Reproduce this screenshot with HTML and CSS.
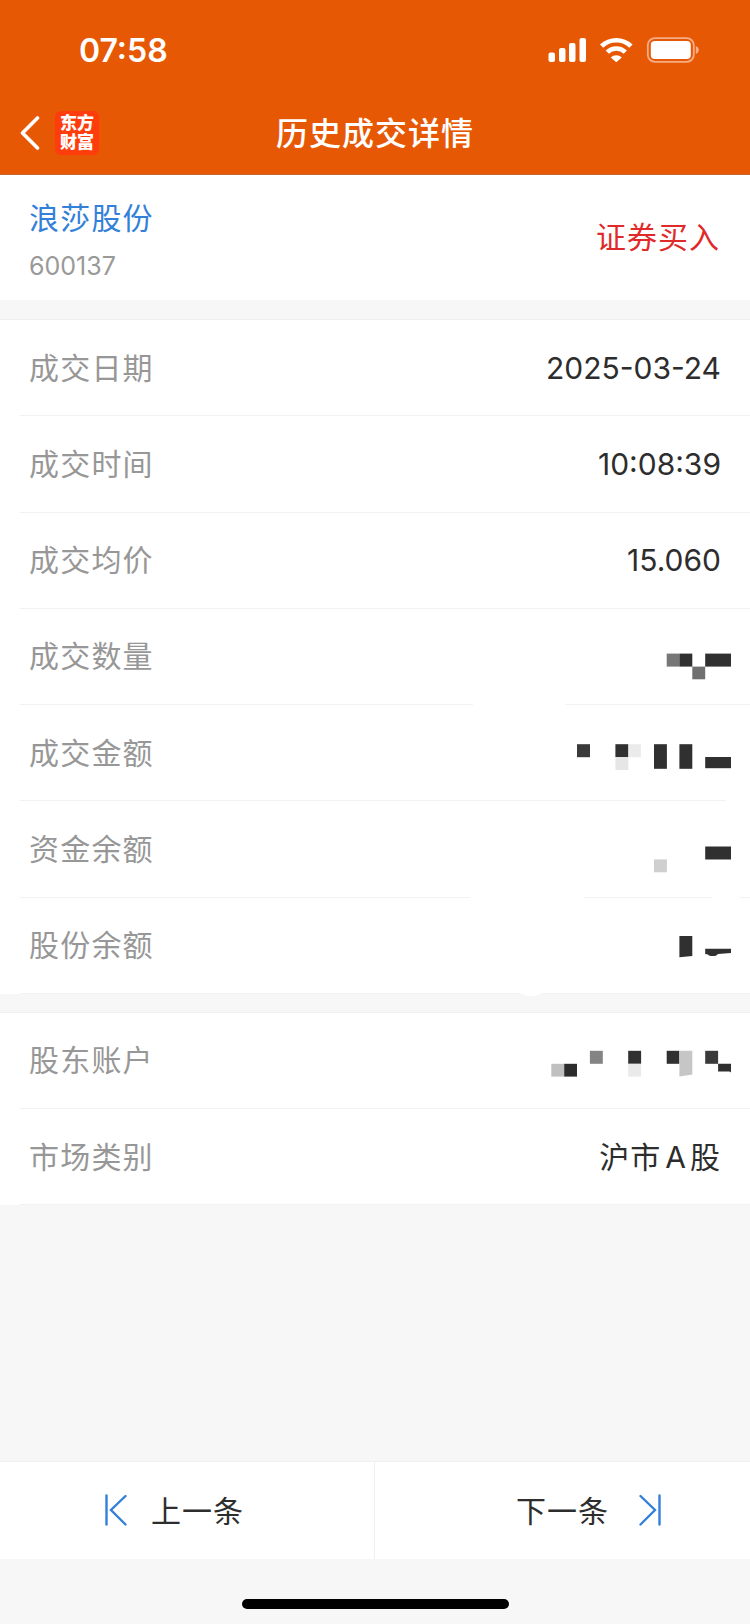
FILE: index.html
```html
<!DOCTYPE html>
<html lang="zh-CN">
<head>
  <meta charset="UTF-8" />
  <meta name="viewport" content="width=device-width, initial-scale=1.0"/>
  <title>历史成交详情</title>
  <link rel="stylesheet" href="styles.css">
</head>
<body>
  <header class="header">
    <div class="statusbar">
      <span class="clock">07:58</span>
      <svg class="status-icons" width="152" height="28" viewBox="0 0 152 28">
        <g fill="#fff">
          <rect x="0.5" y="15.5" width="6.5" height="9.5" rx="2"/>
          <rect x="11" y="11" width="6.5" height="14" rx="2"/>
          <rect x="21" y="6" width="6.5" height="19" rx="2"/>
          <rect x="31.5" y="1" width="6.5" height="24" rx="2"/>
        </g>
        <g fill="none" stroke="#fff" stroke-width="4.6">
          <path d="M53.6 9.2a21.2 21.2 0 0 1 29.4 0"/>
          <path d="M59.3 15.1a13 13 0 0 1 18 0"/>
        </g>
        <path d="M62.8 20.4a8 8 0 0 1 11 0L68.3 25.2z" fill="#fff"/>
        <rect x="99.800" y="1.2" width="46" height="23.6" rx="7" fill="none" stroke="#f6ad85" stroke-width="1.8"/>
        <rect x="102.800" y="4" width="40" height="18" rx="4" fill="#fff"/>
        <path d="M147.800 9v8c2-.7 3-2.300 3-4s-1-3.300-3-4z" fill="#f6ad85"/>
      </svg>
    </div>
    <nav class="navbar">
      <svg class="back" width="20" height="34" viewBox="0 0 20 34">
        <path d="M17.500 2L2.500 17L17.500 32" fill="none" stroke="#fff" stroke-width="3.600" stroke-linecap="round" stroke-linejoin="round"/>
      </svg>
      <div class="logo">东方<br/>财富</div>
      <h1 class="title">历史成交详情</h1>
    </nav>
  </header>

  <section class="summary">
    <div class="stock">
      <div class="stock-name">浪莎股份</div>
      <div class="stock-code">600137</div>
    </div>
    <div class="trade-type">证券买入</div>
  </section>

  <section class="list trade">
    <div class="row"><span class="label">成交日期</span><span class="value">2025-03-24</span></div>
    <div class="row"><span class="label">成交时间</span><span class="value">10:08:39</span></div>
    <div class="row"><span class="label">成交均价</span><span class="value">15.060</span></div>
    <div class="row">
      <span class="label">成交数量</span>
      <svg class="mosaic" width="300" height="96" viewBox="450 608.400 300 96">
        <rect x="473" y="700" width="92" height="8" fill="#fff"/>
        <rect x="666.700" y="654" width="12.700" height="13" fill="#777"/>
        <rect x="679.400" y="654" width="12.900" height="13" fill="#303030"/>
        <rect x="692.300" y="667" width="12.900" height="12.700" fill="#707070"/>
        <rect x="705.200" y="654" width="25.800" height="13" fill="#303030"/>
      </svg>
    </div>
    <div class="row">
      <span class="label">成交金额</span>
      <svg class="mosaic" width="300" height="96" viewBox="450 704.600 300 96">
        <rect x="726" y="796" width="24" height="8" fill="#fff"/>
        <rect x="577" y="743.800" width="13" height="13" fill="#3a3a3a"/>
        <rect x="615.400" y="743.800" width="13" height="13" fill="#303030"/>
        <rect x="628.400" y="743.800" width="12.500" height="13" fill="#ebebeb"/>
        <rect x="615.400" y="756.800" width="13" height="12.800" fill="#e6e6e6"/>
        <rect x="654" y="743.800" width="12.900" height="24.600" fill="#303030"/>
        <rect x="679.400" y="743.800" width="12.900" height="24.600" fill="#303030"/>
        <rect x="705.200" y="756.600" width="25.800" height="11.200" fill="#303030"/>
      </svg>
    </div>
    <div class="row">
      <span class="label">资金余额</span>
      <svg class="mosaic" width="300" height="96" viewBox="450 800.900 300 96">
        <path d="M470 892h114v8H470zM712 892h28v8h-28z" fill="#fff"/>
        <rect x="654" y="859.300" width="12.900" height="12.900" fill="#cfcfcf"/>
        <rect x="705.200" y="846.400" width="25.800" height="13" fill="#303030"/>
      </svg>
    </div>
    <div class="row">
      <span class="label">股份余额</span>
      <svg class="mosaic" width="300" height="96" viewBox="450 897.100 300 96">
        <path d="M514 988h34c-4 5-10 8-17 8s-13-3-17-8z" fill="#fff"/>
        <path d="M679.400 936h12.900v20l-12.900 1.300z" fill="#303030"/>
        <path d="M705.200 948.800H731v4.300l-13 .9c-2 3-9 2.600-10 .5l-2.800-.5z" fill="#303030"/>
      </svg>
    </div>
  </section>

  <section class="list">
    <div class="row">
      <span class="label">股东账户</span>
      <svg class="mosaic" width="300" height="96" viewBox="450 1012.400 300 96">
        <rect x="551.300" y="1064.200" width="12.900" height="12.800" fill="#c0c0c0"/>
        <rect x="564.200" y="1064.200" width="12.800" height="12.800" fill="#2c2c2c"/>
        <rect x="589.900" y="1051.200" width="12.900" height="13" fill="#848484"/>
        <rect x="628.200" y="1051.200" width="12.900" height="13" fill="#303030"/>
        <rect x="628.200" y="1064.200" width="12.900" height="12.800" fill="#eaeaea"/>
        <rect x="666.700" y="1051.200" width="12.700" height="13" fill="#303030"/>
        <path d="M679.400 1051.200h12.900V1075l-12.900 2z" fill="#c6c6c6"/>
        <rect x="705.200" y="1051.200" width="12.900" height="13" fill="#3a3a3a"/>
        <path d="M718.100 1064.200H731v8.800l-1.500-1h-11.400z" fill="#303030"/>
      </svg>
    </div>
    <div class="row"><span class="label">市场类别</span><span class="value market">沪市<span class="latin">A</span>股</span></div>
  </section>

  <footer class="pager">
    <a class="page-btn prev">
      <svg width="22" height="32" viewBox="0 0 22 32">
        <path d="M1.500 1.500V30.500M20.500 2L6 16L20.500 30.500"/>
      </svg>
      <span>上一条</span>
    </a>
    <a class="page-btn next">
      <span>下一条</span>
      <svg width="22" height="32" viewBox="0 0 22 32">
        <path d="M20.500 1.500V30.500M1.500 2L16 16L1.500 30.500"/>
      </svg>
    </a>
  </footer>
  <div class="home-indicator"></div>
</body>
</html>
```

FILE: styles.css
```css
* {
  box-sizing: border-box;
}

body {
  margin: 0;
  width: 750px;
  height: 1624px;
  display: flex;
  flex-direction: column;
  background-color: #f7f7f7;
  color: #2d2d2d;
  font-family: Inter, "Noto Sans CJK SC", sans-serif;
  font-size: 30px;
  line-height: 1;
  overflow: hidden;
}

.header {
  height: 175px;
  flex: none;
  background-color: #e75804;
  border-bottom: 1px solid #c4672f;
  color: #fff;
}

.statusbar {
  height: 98px;
  padding: 37px 50px 0 79px;
  display: flex;
  justify-content: space-between;
  align-items: flex-start;
}

.clock {
  font-size: 32px;
  font-weight: 600;
  line-height: 28px;
}

.navbar {
  height: 70px;
  padding-left: 20px;
  display: grid;
  grid-template-columns: 35px 44px 1fr 99px;
  align-items: center;
}

.logo {
  width: 44px;
  height: 44px;
  padding: 3px 0 0 5px;
  border-radius: 6px;
  background-color: #ff3d0c;
  font-size: 17px;
  font-weight: 900;
  line-height: 19px;
}

.title {
  margin: 0;
  padding-top: 2px;
  text-align: center;
  font-size: 32px;
  font-weight: 500;
  letter-spacing: 1px;
}

.summary {
  height: 125px;
  flex: none;
  padding: 0 30px 0 29px;
  display: flex;
  justify-content: space-between;
  align-items: center;
  background-color: #fff;
}

.stock {
  padding-top: 6px;
}

.stock-name {
  color: #3380d8;
  letter-spacing: 1.2px;
}

.stock-code {
  margin-top: 21px;
  color: #999;
  font-size: 25px;
}

.trade-type {
  padding-bottom: 2px;
  color: #e02a2a;
  letter-spacing: 1px;
}

.list {
  flex: none;
  margin-top: 18px;
  border-top: 1px solid #eeefef;
  background-color: #fff;
}

.trade {
  margin-top: 19px;
}

.row {
  height: 96.25px;
  margin-left: 20px;
  padding: 0 29px 0 9px;
  border-bottom: 1px solid #f1f2f2;
  display: flex;
  justify-content: space-between;
  align-items: center;
}

.label {
  color: #979797;
  letter-spacing: 1.2px;
}

.market {
  letter-spacing: 1px;
}

.latin {
  margin: 0 3px 0 4px;
}

.mosaic {
  margin-right: -29px;
  overflow: visible;
}

.pager {
  height: 98px;
  flex: none;
  margin-top: auto;
  border-top: 1px solid #f0f1f1;
  display: grid;
  grid-template-columns: 1fr 1fr;
  background-color: #fff;
}

.page-btn {
  display: flex;
  align-items: center;
  letter-spacing: 1px;
}

.page-btn svg {
  margin-bottom: 2px;
  fill: none;
  stroke: #3380d8;
  stroke-width: 2.4;
  stroke-linecap: round;
}

.prev {
  padding-left: 105px;
  gap: 24px;
  border-right: 1px solid #eeefef;
}

.next {
  padding-right: 89px;
  justify-content: flex-end;
  gap: 30px;
}

.home-indicator {
  width: 267px;
  height: 10px;
  flex: none;
  margin: 40px auto 15px;
  border-radius: 5px;
  background-color: #000;
}
```
